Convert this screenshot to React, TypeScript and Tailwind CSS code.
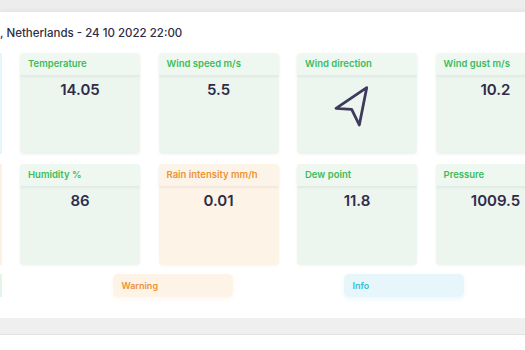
import React from "react";

type Card = { title: string; value?: string; tone: "green" | "orange"; icon?: boolean };

const row1: Card[] = [
  { title: "Temperature", value: "14.05", tone: "green" },
  { title: "Wind speed m/s", value: "5.5", tone: "green" },
  { title: "Wind direction", tone: "green", icon: true },
  { title: "Wind gust m/s", value: "10.2", tone: "green" },
];
const row2: Card[] = [
  { title: "Humidity %", value: "86", tone: "green" },
  { title: "Rain intensity mm/h", value: "0.01", tone: "orange" },
  { title: "Dew point", value: "11.8", tone: "green" },
  { title: "Pressure", value: "1009.5", tone: "green" },
];

function Tile({ c }: { c: Card }) {
  const orange = c.tone === "orange";
  return (
    <div
      className={`w-[120px] shrink-0 h-full rounded-[4px] shadow-[0_1px_3px_rgba(0,0,0,0.04)] flex flex-col ${
        orange ? "bg-[#fdf3e7]" : "bg-[#ecf6ee]"
      }`}
    >
      <div
        className={`h-[22px] rounded-t-[4px] px-[8px] flex items-center text-[9.5px] font-semibold shadow-[0_2px_3px_rgba(0,0,0,0.05)] ${
          orange ? "bg-[#fdf4e9] text-[#ef9230]" : "bg-[#eef8f0] text-[#3dbb5c]"
        }`}
      >
        {c.title}
      </div>
      {c.icon ? (
        <div className="flex justify-center pt-[9px] pr-[10px]">
          <svg width="40" height="44" viewBox="0 0 40 44" fill="none" stroke="#3d3a5c" strokeWidth="2.8" strokeLinejoin="round" strokeLinecap="round">
            <polygon points="34.7 3.7 4 24.3 19.7 25.3 27.3 41 34.7 3.7" />
          </svg>
        </div>
      ) : (
        <div className="pt-[6px] text-center text-[15px] leading-[18px] font-semibold text-[#2e2c4a]">{c.value}</div>
      )}
    </div>
  );
}

function Row({ cards, sliver }: { cards: Card[]; sliver: string }) {
  return (
    <div className="flex gap-[18.5px] h-[101px]">
      <div className={`w-[1.5px] shrink-0 h-full ${sliver}`} />
      {cards.map((c) => (
        <Tile key={c.title} c={c} />
      ))}
    </div>
  );
}

export default function App() {
  return (
    <div
      className="w-[525px] h-[350px] overflow-hidden bg-white"
      style={{ fontFamily: "Inter, 'Noto Sans', sans-serif" }}
    >
      <div className="h-[12px] bg-[#ededed]" />
      <div className="h-[306px] bg-white pt-[13px] shadow-[0_-2px_4px_rgba(0,0,0,0.04)]">
        <div className="text-[11.5px] leading-[16px] font-medium text-[#2f2d45] whitespace-nowrap">
          , Netherlands - 24 10 2022 22:00
        </div>
        <div className="mt-[12px] flex flex-col gap-[10px]">
          <Row cards={row1} sliver="bg-[#e6f4fb]" />
          <Row cards={row2} sliver="bg-[#fdf1e4]" />
        </div>
        <div className="mt-[9px] flex gap-[111px] h-[23px]">
          <div className="w-[1.5px] shrink-0 h-full bg-[#e4f4e6]" />
          <div className="w-[120px] shrink-0 rounded-[5px] bg-[#fdf3e6] shadow-[0_2px_4px_rgba(239,146,48,0.08)] flex items-center px-[9px] text-[9px] font-semibold text-[#ef9230]">
            Warning
          </div>
          <div className="w-[120px] shrink-0 rounded-[5px] bg-[#e6f6fb] shadow-[0_2px_4px_rgba(59,188,214,0.1)] flex items-center px-[9px] text-[9px] font-semibold text-[#3bbcd6]">
            Info
          </div>
        </div>
      </div>
      <div className="h-[17px] bg-[#efefef] border-b border-[#e2e2e2]" />
      <div className="h-[15px] bg-white" />
    </div>
  );
}
